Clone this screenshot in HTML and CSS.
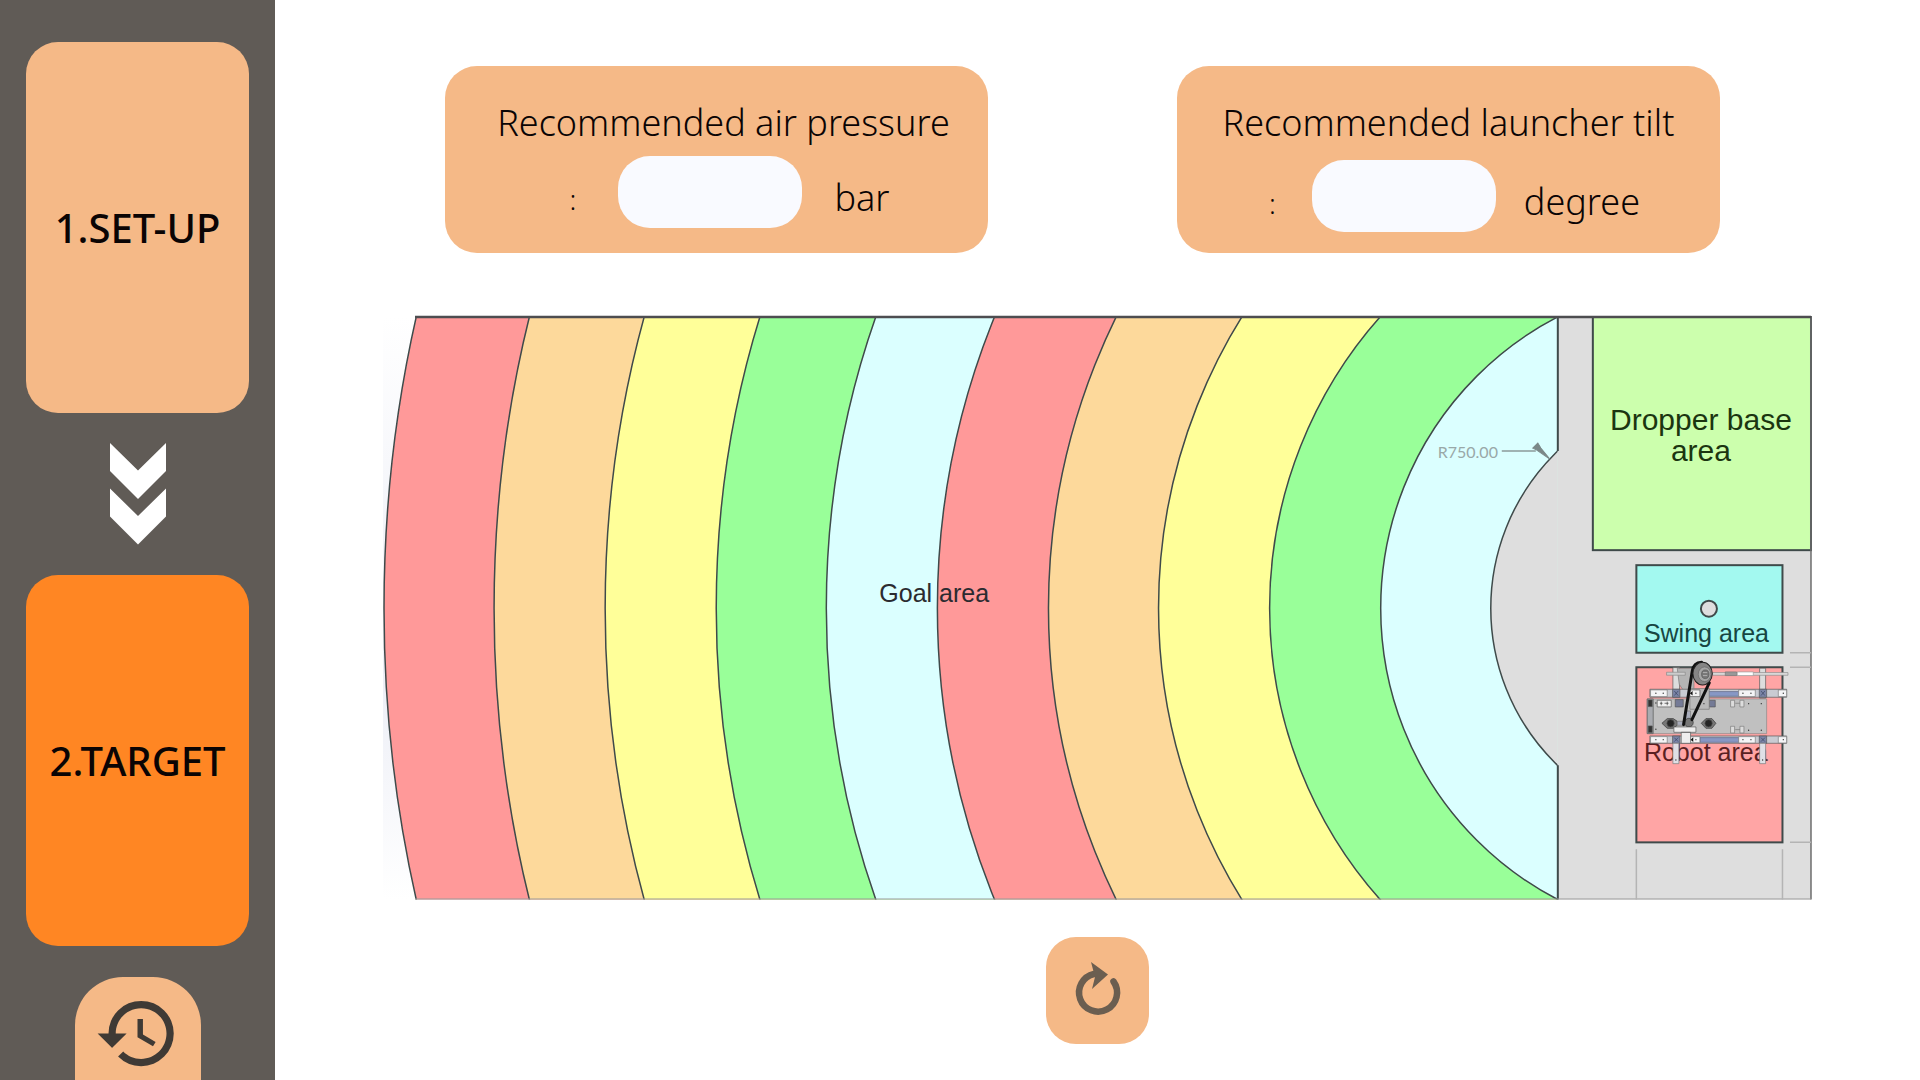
FILE: index.html
```html
<!DOCTYPE html>
<html lang="en">
<head>
  <meta charset="utf-8">
  <title>Launcher target</title>
  <meta name="viewport" content="width=device-width, initial-scale=1">
  <link rel="stylesheet" href="styles.css">
</head>
<body>
  <div class="app">
    <nav class="sidebar">
      <button class="step" type="button">1.SET-UP</button>
      <svg class="chevrons" viewBox="0 0 56 102" aria-hidden="true">
        <path d="M0 0l28 27.500L56 0v28L28 56 0 28zM0 45.500L28 73l28-27.500v28L28 101.500 0 73.500z" fill="#fff"/>
      </svg>
      <button class="step step-active" type="button">2.TARGET</button>
      <button class="history" type="button" aria-label="History">
        <svg class="history-icon" viewBox="0 0 24 24" aria-hidden="true">
          <path fill="#3f3a35" d="M13 3a9 9 0 0 0-9 9H1l3.890 3.890.07.14L9 12H6c0-3.870 3.130-7 7-7s7 3.130 7 7-3.130 7-7 7c-1.930 0-3.680-.79-4.940-2.060l-1.420 1.420A8.954 8.954 0 0 0 13 21a9 9 0 0 0 0-18zm-1 5v5l4.280 2.540.72-1.210-3.500-2.080V8H12z"/>
        </svg>
      </button>
    </nav>

    <main class="main">
      <div class="readings">
        <section class="card card-pressure">
          <label class="card-title" for="pressure">Recommended air pressure</label>
          <div class="card-row">
            <span class="colon">:</span>
            <input class="value" id="pressure" type="text">
            <span class="unit">bar</span>
          </div>
        </section>
        <section class="card card-tilt">
          <label class="card-title" for="tilt">Recommended launcher tilt</label>
          <div class="card-row">
            <span class="colon">:</span>
            <input class="value" id="tilt" type="text">
            <span class="unit">degree</span>
          </div>
        </section>
      </div>

      <svg class="field" viewBox="384 315 1428 585" role="img" aria-label="Field map">
        <defs>
          <clipPath id="court"><rect x="384" y="316" width="1174" height="583"/></clipPath>
          <linearGradient id="shade" x1="0" y1="0" x2="0" y2="1">
            <stop offset="0" stop-color="#fff"/>
            <stop offset=".6" stop-color="#eceef6"/>
            <stop offset="1" stop-color="#fff"/>
          </linearGradient>
        </defs>
        <rect x="384" y="316" width="40" height="583" fill="url(#shade)"/>
        <!-- Scoring rings, largest first, all centred on the swing pole -->
        <g clip-path="url(#court)" class="ring">
          <circle cx="1709" cy="608" r="1324" fill="#ff9999"/>
          <circle cx="1709" cy="608" r="1214" fill="#fdd99b"/>
          <circle cx="1709" cy="608" r="1103" fill="#ffff99"/>
          <circle cx="1709" cy="608" r="992" fill="#99ff99"/>
          <circle cx="1709" cy="608" r="882" fill="#dbffff"/>
          <circle cx="1709" cy="608" r="771" fill="#ff9999"/>
          <circle cx="1709" cy="608" r="660" fill="#fdd99b"/>
          <circle cx="1709" cy="608" r="550" fill="#ffff99"/>
          <circle cx="1709" cy="608" r="439" fill="#99ff99"/>
          <circle cx="1709" cy="608" r="328" fill="#dbffff"/>
          <circle cx="1709" cy="608" r="218" fill="#dedede"/>
        </g>
        <rect x="1558" y="316" width="253" height="583" fill="#dedede"/>
        <path d="M1558 317v134M1558 765v134" class="edge"/>
        <rect x="1593" y="317" width="218" height="233" fill="#ccffad" class="edge"/>
        <path d="M1811 316v583" stroke="#6d6d6d" stroke-width="1.500"/>
        <path d="M416 317H1811" stroke="#4d4d50" stroke-width="2.500"/>
        <path d="M416 898.500H1811" stroke="#999" stroke-width="1"/>
        <path d="M1790 652.500h21M1790 667h21M1790 842h21M1636.500 849v50M1782.500 849v50" stroke="#b4b4b4" stroke-width="1.500"/>

        <path d="M1502 451h34" stroke="#8b9a9a" stroke-width="1.500"/>
        <path d="M1533 448l5-5 3 5 9 11-13-9z" fill="#7b8888" stroke="#7b8888"/>
        <text x="1438" y="458" class="dimension">R750.00</text>

        <text x="880" y="602" class="zone goal">Goal area</text>
        <text x="1701" y="430" class="zone-large">Dropper base</text>
        <text x="1701" y="461" class="zone-large">area</text>

        <rect x="1636.500" y="565" width="146" height="87.500" fill="#a3f9f0" class="edge"/>
        <circle cx="1709" cy="608.500" r="8" fill="#dedede" class="edge"/>
        <text x="1644" y="642" class="zone swing">Swing area</text>
        <rect x="1636.500" y="667" width="146" height="175" fill="#ffa5a5" class="edge"/>
        <text x="1644" y="761" class="zone robot">Robot area</text>

        <!-- Launcher robot, drawn in thirds of a field unit -->
        <g transform="translate(1600 540) scale(.33333)" stroke="#555" stroke-width="2">
          <path d="M219 382h20v88h-20zM479 384h18v90h-18z" fill="#ddd"/>
          <path d="M232 384h50v66h-32l-12-18z" fill="#b4b4b4" stroke="#777"/>
          <path d="M200 396h56v9h-56z" fill="#ccc" stroke="#888"/>
          <path d="M338 397h226v8H338z" fill="#ddd" stroke="#888"/>
          <path d="M376 395h34v11h-34z" fill="#999" stroke="#777"/>
          <path d="M412 395h48v11h-48z" fill="#fff" stroke="#999"/>
          <path d="M142 476h358v104H142z" fill="#c0c0c0" stroke="#888"/>
          <path d="M142 476h18v104h-18z" fill="#a9abb0"/>
          <path d="M145 479h12v20h-12zM145 557h12v20h-12z" fill="#333"/>
          <path d="M150 447h410v24H150zM150 587h410v22H150z" fill="#c9cbd2"/>
          <path d="M300 454h118v14H300zM300 592h118v14H300z" fill="#8797c4" stroke="#5e6784"/>
          <path d="M152 449h50v20h-50zM416 449h50v20h-50zM535 449h25v20h-25zM152 589h50v19h-50zM416 589h50v19h-50zM535 589h25v19h-25z" fill="#f4f4f6" stroke="#777"/>
          <path d="M172 480h42v20h-42z" fill="#eee"/>
          <path d="M180 489h8m6 0h12M184 484v11M202 484v11" stroke="#333"/>
          <path d="M226 478h24v22h-24zM328 480h18v20h-18z" fill="#747a96"/>
          <path d="M270 445h58v62h-58z" fill="#b9b9b9" stroke="#777"/>
          <path d="M270 449h30v20h-30z" fill="#f2f2f2"/>
          <path d="M392 480h12v20h-12zm14 9h14m0-9h12v20h-12zM392 558h12v20h-12zm14 10h14m0-10h12v20h-12z" fill="#ddd" stroke="#777"/>
          <path d="M218 447h22v24h-22zM478 447h22v24h-22zM218 587h22v22h-22zM478 587h22v22h-22z" fill="#7b85a7"/>
          <path d="M223 452l12 14m0-14l-12 14M483 452l12 14m0-14l-12 14M223 592l12 12m0-12l-12 12M483 592l12 12m0-12l-12 12" stroke="#384260"/>
          <path d="M219 609h18v61h-18zM479 609h18v61h-18z" fill="#dfe0e6" stroke="#777"/>
          <path d="M186 549l16-14h18l12 8v12l-12 9h-18zM304 549l14-14h18l12 14-12 15h-18z" fill="#777" stroke="#333"/>
          <circle cx="212" cy="549" r="11" fill="#252525"/>
          <circle cx="326" cy="549" r="11" fill="#252525"/>
          <path d="M232 543h20v12h-20zM256 512h16v38h-16z" fill="#a9adbb" stroke="#777"/>
          <circle cx="267" cy="547" r="13" fill="#777" stroke="#333"/>
          <path d="M222 560h66v16h-66zM244 576h28v33h-28z" fill="#eee"/>
          <path d="M272 589h28v18h-28z" fill="#f4f4f6" stroke="#777"/>
          <path d="M278 452v14l-8-7zM280 591v14l-8-7z" fill="#111" stroke="none"/>
          <path d="M168 488v.1M312 490v.1M446 490v.1M484 490v.1M168 567v.1M446 570v.1M484 570v.1M168 459v.1M190 459v.1M429 459v.1M453 459v.1M550 459v.1M168 598v.1M190 598v.1M429 598v.1M453 598v.1M550 598v.1M228 659v.1M488 659v.1M288 598v.1M288 459v.1" stroke="#333" stroke-width="4" stroke-linecap="round"/>
          <path d="M251 553L277 393q4-26 28-27M276 538l52-110" fill="none" stroke="#111" stroke-width="9" stroke-linecap="round"/>
          <ellipse cx="308" cy="400" rx="29" ry="34" fill="#858585" stroke="#222" stroke-width="3"/>
          <ellipse cx="314" cy="402" rx="19" ry="22" fill="#a5a5a5" stroke="#666"/>
          <ellipse cx="316" cy="402" rx="11" ry="13" fill="#777"/>
          <path d="M309 397h13m-13 9h13" stroke="#ccc"/>
        </g>
      </svg>

      <button class="refresh" type="button" aria-label="Refresh">
        <svg class="refresh-icon" viewBox="0 0 48 56" aria-hidden="true">
          <path d="M39.500 18.500A19 19 0 1 1 20 11" fill="none" stroke="#6b5e50" stroke-width="6.500" stroke-linecap="round"/>
          <path d="M17-1l17 12.500L18 26l3-12z" fill="#6b5e50"/>
        </svg>
      </button>
    </main>
  </div>
</body>
</html>
```
FILE: styles.css
```css
* {
  box-sizing: border-box;
}

body {
  margin: 0;
  background: #fff;
  color: #0a0404;
  font-family: "Noto Sans", "Open Sans", sans-serif;
}

button {
  padding: 0;
  border: 0;
  color: inherit;
  font: inherit;
  cursor: pointer;
}

.app {
  display: flex;
  min-height: 100vh;
}

.sidebar {
  display: flex;
  flex: none;
  flex-direction: column;
  align-items: center;
  width: 275px;
  padding: 42px 26px 0;
  background: #605b56;
}

.step {
  flex: none;
  width: 100%;
  height: 371px;
  border-radius: 32px;
  background: #f5b987;
  font-size: 40px;
  font-weight: 500;
}

.step-active {
  background: #ff8623;
}

.chevrons {
  flex: none;
  width: 56px;
  height: 102px;
  margin: 30px 0;
}

.history {
  display: flex;
  flex: 1;
  justify-content: center;
  width: 126px;
  min-height: 102px;
  margin-top: 31px;
  padding-top: 13px;
  border-radius: 48px 48px 0 0;
  background: #f5b987;
}

.history-icon {
  flex: none;
  width: 87px;
  height: 87px;
}

.main {
  display: flex;
  flex: 1;
  flex-direction: column;
  align-items: center;
  min-width: 0;
  padding: 66px 108px 36px;
}

.readings {
  display: flex;
  justify-content: space-between;
  align-self: stretch;
  gap: 32px;
  padding: 0 92px 0 62px;
}

.card {
  display: flex;
  flex: 0 1 543px;
  flex-direction: column;
  align-items: center;
  height: 187px;
  padding-top: 32px;
  border-radius: 32px;
  background: #f5b987;
  font-size: 36px;
  font-weight: 350;
  line-height: 50px;
}

.card-row {
  display: flex;
  align-items: center;
  padding-left: 12px;
}

.card-pressure {
  padding-left: 14px;
}

.card-pressure .card-row {
  gap: 32px;
  margin-top: 8px;
}

.card-pressure .colon {
  padding-right: 10px;
}

.card-tilt .card-row {
  gap: 28px;
  margin-top: 12px;
}

.card-tilt .colon {
  padding-right: 8px;
}

.colon {
  padding-top: 14px;
  font-size: 28px;
}

.value {
  width: 184px;
  height: 72px;
  padding: 0 24px;
  border: 0;
  border-radius: 32px;
  background: #f9faff;
  font: inherit;
  text-align: center;
}

.unit {
  padding-top: 12px;
}

.field {
  display: block;
  width: 100%;
  margin-top: 62px;
}

.ring circle,
.edge {
  stroke: #3f4a4a;
  stroke-width: 2;
}

.ring circle {
  stroke-width: 1.5;
}

.zone {
  fill: #222;
  font: 25px "Liberation Sans", Arial, sans-serif;
}

.goal {
  fill: #2b2b30;
}

.swing {
  fill: #174642;
}

.robot {
  fill: #5a1f22;
}

.zone-large {
  fill: #1b3510;
  font: 30px "Liberation Sans", Arial, sans-serif;
  text-anchor: middle;
}

.dimension {
  fill: #99a8a8;
  font: 16px Lato, sans-serif;
}

.refresh {
  display: flex;
  align-items: center;
  justify-content: center;
  width: 103px;
  height: 107px;
  margin-top: 37px;
  border-radius: 30px;
  background: #f5b987;
}

.refresh-icon {
  width: 48px;
  height: 56px;
  overflow: visible;
}
```
